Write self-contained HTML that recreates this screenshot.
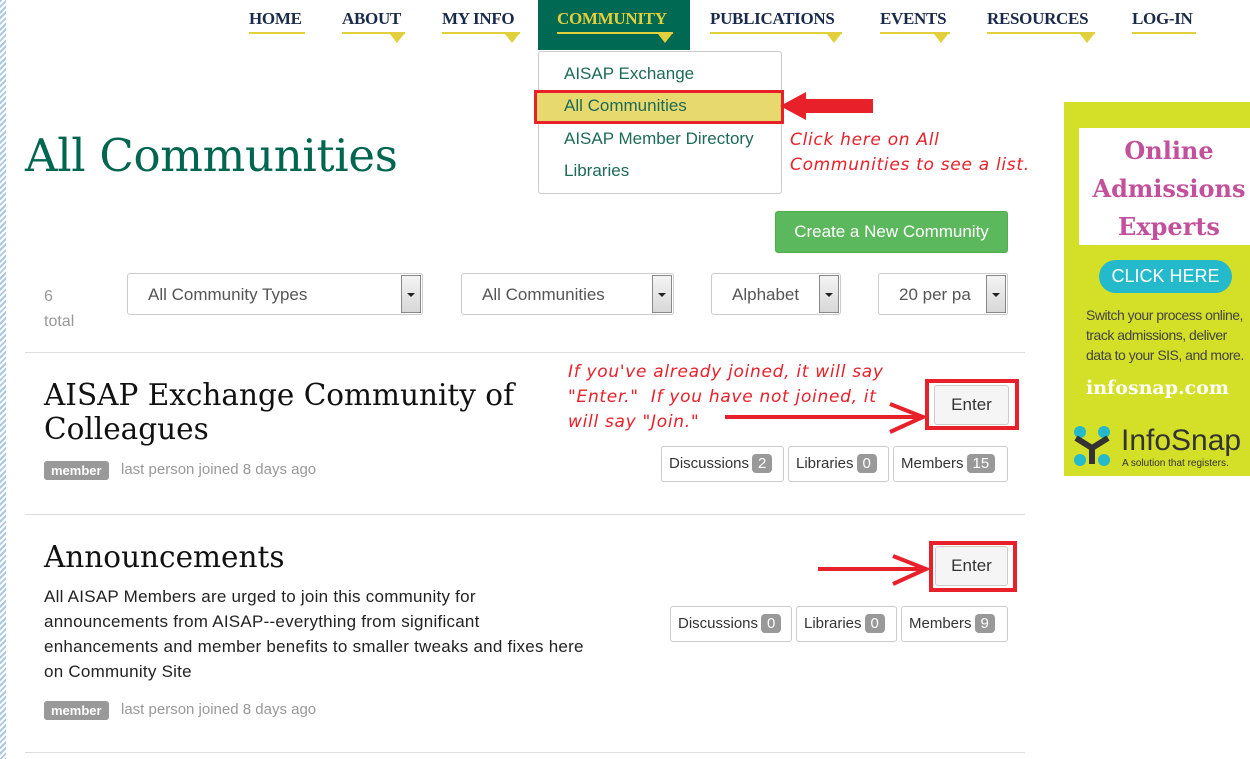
<!DOCTYPE html>
<html><head><meta charset="utf-8"><style>
*{margin:0;padding:0;box-sizing:border-box}
body{width:1250px;height:759px;overflow:hidden;background:#fff;position:relative;font-family:"Liberation Sans",sans-serif;color:#333}
.a{position:absolute;white-space:nowrap}
.stripe{left:0;top:0;width:6px;height:759px;background:repeating-linear-gradient(135deg,#a9c8e4 0 2px,#fff 2px 4px)}
.nav{font-family:"Liberation Serif",serif;font-weight:bold;font-size:17px;color:#1a2a4a;top:9px;letter-spacing:-0.3px}
.ul{height:2px;background:#e2cf3c}
.tri{width:0;height:0;border-left:7px solid transparent;border-right:7px solid transparent;border-top:9px solid #e2cf3c}
.dd{font-size:17px;color:#1d6a57}
.sel{border:1px solid #ccc;border-radius:3px;height:42px;background:#fff;font-size:17px;color:#555;padding:11px 20px}
.sel .btn{position:absolute;right:1px;top:1px;width:20px;height:38px;border:1px solid #888;background:linear-gradient(#f4f4f4,#d8d8d8)}
.sel .btn:after{content:"";position:absolute;left:5px;top:17px;border-left:4px solid transparent;border-right:4px solid transparent;border-top:4px solid #222}
.hr{height:1px;background:#ddd;left:25px;width:1000px}
.h2{font-family:"DejaVu Serif",serif;font-size:29.5px;color:#111;line-height:34px}
.badge{background:#999;color:#fff;font-weight:bold;font-size:13px;border-radius:3px;padding:2px 7px;height:19px}
.meta{font-size:15px;color:#999}
.cnt{border:1px solid #ccc;border-radius:3px;height:36px;font-size:15px;color:#333;padding:8px 7px}
.cnt b{font-weight:normal;background:#999;color:#fff;border-radius:4px;padding:1px 6px;margin-left:3px}
.enter{border:1px solid #ccc;border-radius:3px;background:#f5f5f5;font-size:17px;color:#333;text-align:center;line-height:38px}
.red{border:4px solid #e8202a}
.hand{font-family:"DejaVu Sans",cursive;font-style:italic;color:#e8202a;font-size:17px;letter-spacing:0.7px;line-height:25px}
</style></head><body>
<div class="a stripe"></div>

<div class="a nav" style="left:249px">HOME</div><div class="a ul" style="left:249px;top:32px;width:56px"></div>
<div class="a nav" style="left:342px">ABOUT</div><div class="a ul" style="left:342px;top:32px;width:63px"></div><div class="a tri" style="left:390px;top:34px"></div>
<div class="a nav" style="left:442px">MY INFO</div><div class="a ul" style="left:442px;top:32px;width:78px"></div><div class="a tri" style="left:505px;top:34px"></div>
<div class="a" style="left:538px;top:0;width:152px;height:50px;background:#006953"></div>
<div class="a nav" style="left:557px;color:#e2cf3c">COMMUNITY</div><div class="a ul" style="left:557px;top:32px;width:116px"></div><div class="a tri" style="left:658px;top:34px"></div>
<div class="a nav" style="left:710px">PUBLICATIONS</div><div class="a ul" style="left:710px;top:32px;width:132px"></div><div class="a tri" style="left:827px;top:34px"></div>
<div class="a nav" style="left:880px">EVENTS</div><div class="a ul" style="left:880px;top:32px;width:70px"></div><div class="a tri" style="left:934px;top:34px"></div>
<div class="a nav" style="left:987px">RESOURCES</div><div class="a ul" style="left:987px;top:32px;width:108px"></div><div class="a tri" style="left:1080px;top:34px"></div>
<div class="a nav" style="left:1132px">LOG-IN</div><div class="a ul" style="left:1132px;top:32px;width:64px"></div>

<div class="a" style="left:538px;top:51px;width:244px;height:143px;border:1px solid #ccc;border-radius:3px;background:#fff"></div>
<div class="a dd" style="left:564px;top:64px">AISAP Exchange</div>
<div class="a" style="left:534px;top:90px;width:250px;height:34px;background:#e8d96e;border:3px solid #e8202a"></div>
<div class="a dd" style="left:564px;top:96px">All Communities</div>
<div class="a dd" style="left:564px;top:129px">AISAP Member Directory</div>
<div class="a dd" style="left:564px;top:161px">Libraries</div>
<svg class="a" style="left:776px;top:88px" width="100" height="36"><path d="M4 18 L30 4 L30 11 L97 11 L97 25 L30 25 L30 32 Z" fill="#e8202a"/></svg>
<div class="a hand" style="left:790px;top:128px">Click here on All<br>Communities to see a list.</div>

<div class="a" style="left:25px;top:129px;font-family:'DejaVu Serif',serif;font-size:45px;color:#00664f;letter-spacing:-0.3px">All Communities</div>

<div class="a" style="left:775px;top:211px;width:233px;height:42px;background:#5cb85c;border-radius:3px;border:1px solid #4cae4c;color:#fff;font-size:17px;text-align:center;line-height:40px">Create a New Community</div>

<div class="a" style="left:44px;top:284px;font-size:16px;color:#999;line-height:25px;white-space:normal">6<br>total</div>
<div class="a sel" style="left:127px;top:273px;width:296px">All Community Types<div class="btn"></div></div>
<div class="a sel" style="left:461px;top:273px;width:213px">All Communities<div class="btn"></div></div>
<div class="a sel" style="left:711px;top:273px;width:130px">Alphabet<div class="btn"></div></div>
<div class="a sel" style="left:878px;top:273px;width:130px;overflow:hidden">20 per pa<div class="btn"></div></div>

<div class="a hr" style="top:352px"></div>
<div class="a h2" style="left:44px;top:378px">AISAP Exchange Community of<br>Colleagues</div>
<div class="a badge" style="left:44px;top:461px">member</div>
<div class="a meta" style="left:121px;top:461px">last person joined 8 days ago</div>
<div class="a hand" style="left:568px;top:360px">If you've already joined, it will say<br>"Enter."&nbsp; If you have not joined, it<br>will say "Join."</div>
<svg class="a" style="left:720px;top:400px" width="210" height="36"><path d="M5 17 H200 M170 4 L203 17 L170 32" stroke="#e8202a" stroke-width="4" fill="none"/></svg>
<div class="a red" style="left:925px;top:379px;width:94px;height:51px"></div>
<div class="a enter" style="left:934px;top:385px;width:75px;height:40px">Enter</div>
<div class="a cnt" style="left:661px;top:446px;width:123px">Discussions<b>2</b></div>
<div class="a cnt" style="left:788px;top:446px;width:101px">Libraries<b>0</b></div>
<div class="a cnt" style="left:893px;top:446px;width:115px">Members<b>15</b></div>

<div class="a hr" style="top:514px"></div>
<div class="a h2" style="left:44px;top:540px">Announcements</div>
<div class="a" style="left:44px;top:584px;font-size:17px;letter-spacing:0.25px;color:#222;line-height:25px">All AISAP Members are urged to join this community for<br>announcements from AISAP--everything from significant<br>enhancements and member benefits to smaller tweaks and fixes here<br>on Community Site</div>
<div class="a badge" style="left:44px;top:701px">member</div>
<div class="a meta" style="left:121px;top:701px">last person joined 8 days ago</div>
<svg class="a" style="left:815px;top:552px" width="118" height="36"><path d="M3 17 H110 M78 4 L111 17 L78 32" stroke="#e8202a" stroke-width="4" fill="none"/></svg>
<div class="a red" style="left:929px;top:541px;width:88px;height:51px"></div>
<div class="a enter" style="left:935px;top:546px;width:73px;height:40px">Enter</div>
<div class="a cnt" style="left:670px;top:606px;width:122px">Discussions<b>0</b></div>
<div class="a cnt" style="left:796px;top:606px;width:101px">Libraries<b>0</b></div>
<div class="a cnt" style="left:901px;top:606px;width:107px">Members<b>9</b></div>
<div class="a hr" style="top:752px"></div>

<div class="a" style="left:1064px;top:102px;width:186px;height:374px;background:#d4df27;overflow:hidden">
 <div class="a" style="left:15px;top:26px;width:180px;height:117px;background:#fff"></div>
 <div class="a" style="left:20px;top:30px;width:170px;font-family:'DejaVu Serif',serif;font-weight:bold;font-size:24px;line-height:38px;color:#c3509b;text-align:center">Online<br>Admissions<br>Experts</div>
 <div class="a" style="left:35px;top:158px;width:133px;height:33px;background:#25b9cc;border-radius:17px;color:#fff;font-size:18px;text-align:center;line-height:33px">CLICK HERE</div>
 <div class="a" style="left:22px;top:203px;font-size:14px;line-height:20px;color:#444;letter-spacing:-0.5px">Switch your process online,<br>track admissions, deliver<br>data to your SIS, and more.</div>
 <div class="a" style="left:22px;top:275px;font-family:'DejaVu Serif',serif;font-weight:bold;font-size:19px;color:#fff">infosnap.com</div>
 <svg class="a" style="left:6px;top:322px" width="44" height="44"><circle cx="10" cy="8" r="6" fill="#25b9cc"/><circle cx="34" cy="8" r="6" fill="#25b9cc"/><circle cx="10" cy="36" r="6" fill="#25b9cc"/><circle cx="34" cy="36" r="6" fill="#25b9cc"/><path d="M6 14 L22 24 L38 14 M22 24 V40" stroke="#333" stroke-width="6" fill="none"/></svg>
 <div class="a" style="left:57px;top:322px;font-size:30px;color:#333">InfoSnap</div>
 <div class="a" style="left:58px;top:356px;font-size:10px;color:#333">A solution that registers.</div>
</div>
</body></html>
